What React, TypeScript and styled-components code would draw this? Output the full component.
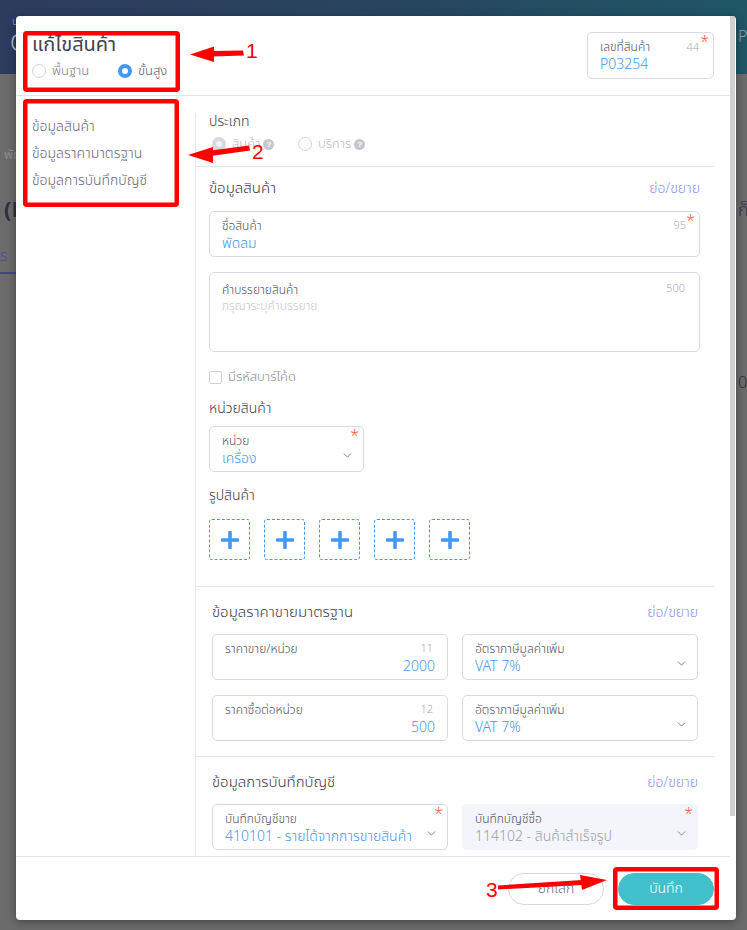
import React from 'react';
import styled, { createGlobalStyle } from 'styled-components';
import { ChevronDown } from 'lucide-react';

const GlobalStyle = createGlobalStyle`
    html, body {
        margin: 0;
        padding: 0;
    }
    body {
        font-family: "Noto Sans Thai", "Noto Sans", "DejaVu Sans", sans-serif;
        font-weight: 300;
    }
    * {
        box-sizing: border-box;
    }
`;

const BLUE = '#4398f3';
const LINE = '#e4e3ed';
const BORDER = '#dad9e6';

/* ---------- dimmed page behind the dialog ---------- */

const Page = styled.div`
    position: relative;
    width: 747px;
    height: 930px;
    overflow: hidden;
    background: #6b6b6b;
`;

const BgHeader = styled.div`
    height: 74px;
    display: flex;
    align-items: center;
    justify-content: space-between;
    padding-left: 10px;
    background: linear-gradient(90deg, #2d3b5d 0%, #28465f 55%, #1f5766 100%);
`;

const BgBrand = styled.div`
    display: flex;
    flex-direction: column;
    color: #a9b3c4;
    white-space: nowrap;
`;

const BgSmall = styled.span`
    font-size: 11px;
    line-height: 14px;
    padding-left: 2px;
`;

const BgBig = styled.span`
    font-size: 24px;
    line-height: 30px;
    color: #b9c1cd;
`;

const BgRight = styled.span<{ $color?: string; $size?: number }>`
    width: 9px;
    white-space: nowrap;
    color: ${(p) => p.$color || '#8fa0b2'};
    font-size: ${(p) => p.$size || 16}px;
`;

const BgBody = styled.div`
    display: flex;
    flex-direction: column;
    padding-left: 4px;
`;

const BgRow = styled.div<{ $mt: number; $h: number }>`
    margin-top: ${(p) => p.$mt}px;
    height: ${(p) => p.$h}px;
    display: flex;
    align-items: center;
    justify-content: space-between;
    white-space: nowrap;
`;

const BgText = styled.span<{ $color: string; $size: number; $bold?: boolean }>`
    color: ${(p) => p.$color};
    font-size: ${(p) => p.$size}px;
    font-weight: ${(p) => (p.$bold ? 700 : 400)};
`;

const BgTab = styled.div`
    width: 24px;
    margin-left: -4px;
    height: 34px;
    border-bottom: 2px solid #45457f;
    display: flex;
    align-items: center;
    color: #4a4a92;
    font-size: 16px;
    overflow: hidden;
    white-space: nowrap;
`;

/* ---------- dialog ---------- */

const Modal = styled.div`
    position: absolute;
    top: 16px;
    left: 16px;
    width: 720px;
    height: 904px;
    background: #fff;
    border-radius: 4px;
    box-shadow: 0 2px 10px rgba(0, 0, 0, 0.35);
    display: flex;
    overflow: hidden;
`;

const ModalMain = styled.div`
    flex: 1;
    min-width: 0;
    display: flex;
    flex-direction: column;
`;

const ScrollTrack = styled.div`
    flex: none;
    width: 6px;
`;

const ScrollThumb = styled.div`
    width: 5px;
    height: 800px;
    background: #d0d0d0;
`;

const Header = styled.div`
    flex: none;
    height: 80px;
    display: flex;
    justify-content: space-between;
    align-items: flex-start;
    padding: 16px 16px 0 16px;
    border-bottom: 1px solid ${LINE};
`;

const Title = styled.h1`
    margin: 0 0 3px;
    font-size: 20px;
    line-height: 26px;
    font-weight: 400;
    color: #434354;
`;

const RadioGroup = styled.div`
    display: flex;
`;

const RadioOption = styled.label<{ $tone: 'muted' | 'dark' | 'disabled' }>`
    width: 86px;
    display: flex;
    align-items: center;
    gap: 6px;
    font-size: 13px;
    line-height: 20px;
    color: ${(p) => (p.$tone === 'dark' ? '#555566' : p.$tone === 'disabled' ? '#b6b6c2' : '#7c7c8c')};
`;

const RadioDot = styled.span<{ $state: 'on' | 'off' | 'locked' }>`
    flex: none;
    width: 14px;
    height: 14px;
    border-radius: 50%;
    background: ${(p) => (p.$state === 'locked' ? '#f2f2f6' : '#fff')};
    border: ${(p) =>
        p.$state === 'on'
            ? `4px solid ${BLUE}`
            : p.$state === 'locked'
            ? '4px solid #d8d8e0'
            : '1px solid #d2d1de'};
`;

const HelpIcon = styled.span`
    width: 11px;
    height: 11px;
    margin-left: -3px;
    border-radius: 50%;
    background: #c6c6ce;
    color: #fff;
    font-family: "Liberation Sans", sans-serif;
    font-size: 8px;
    font-weight: 700;
    line-height: 11px;
    text-align: center;
`;

const Body = styled.div`
    flex: 1;
    min-height: 0;
    display: flex;
`;

const Nav = styled.nav`
    flex: none;
    width: 179px;
    padding: 17px 0 0 16px;
    display: flex;
    flex-direction: column;
`;

const NavItem = styled.span`
    font-size: 14px;
    line-height: 27px;
    color: #66667a;
`;

const Content = styled.div`
    flex: 1;
    min-width: 0;
    margin-top: 17px;
    padding-right: 16px;
    border-left: 1px solid #e6e5ee;
    overflow: hidden;
`;

const Section = styled.section<{ $pad: string; $last?: boolean }>`
    padding: ${(p) => p.$pad};
    border-bottom: ${(p) => (p.$last ? 'none' : `1px solid ${LINE}`)};
`;

const TypeTitle = styled.div`
    font-size: 14px;
    line-height: 18px;
    color: #3c3c4c;
`;

const TypeOptions = styled(RadioGroup)`
    margin-top: 3px;
    padding-left: 3px;
`;

const SectionHead = styled.div`
    height: 20px;
    display: flex;
    align-items: center;
    justify-content: space-between;
`;

const SectionTitle = styled.span`
    font-size: 15px;
    color: #3a3a4a;
`;

const CollapseLink = styled.span`
    font-size: 14px;
    color: #8794f2;
`;

const SubTitle = styled.div<{ $mt: number }>`
    margin-top: ${(p) => p.$mt}px;
    font-size: 14px;
    line-height: 20px;
    color: #3a3a4a;
`;

const FieldBox = styled.div<{ $w?: number; $h?: number; $mt?: number; $pt?: number; $locked?: boolean }>`
    position: relative;
    width: ${(p) => (p.$w ? `${p.$w}px` : 'auto')};
    height: ${(p) => p.$h || 46}px;
    margin-top: ${(p) => p.$mt || 0}px;
    padding: ${(p) => p.$pt ?? 6}px 12px 0 12px;
    border: 1px solid ${(p) => (p.$locked ? '#f4f5fa' : BORDER)};
    border-radius: 5px;
    background: ${(p) => (p.$locked ? '#f4f5fa' : '#fff')};
`;

const FieldLabel = styled.div`
    font-size: 12px;
    line-height: 16px;
    color: #505062;
`;

const FieldValue = styled.div<{ $right?: boolean; $muted?: boolean }>`
    font-size: 14px;
    line-height: 20px;
    text-align: ${(p) => (p.$right ? 'right' : 'left')};
    color: ${(p) => (p.$muted ? '#9c9cab' : BLUE)};
    white-space: nowrap;
`;

const Placeholder = styled.div`
    font-size: 12px;
    line-height: 16px;
    color: #c4c4ce;
`;

const Counter = styled.span<{ $top?: number; $right?: number }>`
    position: absolute;
    top: ${(p) => p.$top ?? 6}px;
    right: ${(p) => p.$right ?? 13}px;
    font-size: 11px;
    line-height: 16px;
    color: #a8a8b8;
`;

const Required = styled.span`
    position: absolute;
    top: 1px;
    right: 4px;
    font-size: 16px;
    line-height: 16px;
    color: #f0603c;
`;

const ChevronSlot = styled.span`
    position: absolute;
    right: 9px;
    bottom: 9px;
    display: flex;
    color: #6c6c7c;
`;

const CheckRow = styled.label`
    margin-top: 15px;
    height: 20px;
    display: flex;
    align-items: center;
    gap: 6px;
    font-size: 13px;
    color: #8a8a9a;
`;

const CheckBox = styled.span`
    width: 13px;
    height: 13px;
    border: 1px solid #cfcfdc;
    border-radius: 2px;
`;

const UploadRow = styled.div`
    margin-top: 13px;
    display: flex;
    gap: 14px;
`;

const UploadTile = styled.div`
    width: 41px;
    height: 41px;
    border: 1px dashed ${BLUE};
    border-radius: 3px;
    display: flex;
    align-items: center;
    justify-content: center;
`;

const FieldGrid = styled.div`
    margin-top: 12px;
    display: grid;
    grid-template-columns: 1fr 1fr;
    column-gap: 14px;
    row-gap: 15px;
`;

const Footer = styled.div`
    flex: none;
    height: 64px;
    display: flex;
    justify-content: flex-end;
    align-items: center;
    gap: 14px;
    padding-right: 16px;
    border-top: 1px solid ${LINE};
`;

const Button = styled.button<{ $primary?: boolean }>`
    width: 96px;
    height: 32px;
    border-radius: 16px;
    font: inherit;
    font-size: 14px;
    cursor: pointer;
    border: 1px solid ${(p) => (p.$primary ? '#41bfca' : '#d6d5e1')};
    background: ${(p) => (p.$primary ? '#41bfca' : '#fff')};
    color: ${(p) => (p.$primary ? '#fff' : '#6d6d7d')};
`;

/* ---------- red annotations drawn over the screenshot ---------- */

const Annotations = styled.svg`
    position: absolute;
    top: 0;
    left: 0;
    pointer-events: none;
`;

const Plus = () => (
    <svg width="18" height="18" viewBox="0 0 18 18">
        <path d="M9 1.5v15M1.5 9h15" stroke={BLUE} strokeWidth="3.6" strokeLinecap="round" />
    </svg>
);

const Help = () => <HelpIcon>?</HelpIcon>;

const Chevron = () => (
    <ChevronSlot>
        <ChevronDown size={13} strokeWidth={1.6} />
    </ChevronSlot>
);

const App = () => {
    return (
        <>
            <GlobalStyle />
            <Page>
                <BgHeader>
                    <BgBrand>
                        <BgSmall>บริษัท</BgSmall>
                        <BgBig>Online</BgBig>
                    </BgBrand>
                    <BgRight>PRO</BgRight>
                </BgHeader>
                <BgBody>
                    <BgRow $mt={71} $h={20}>
                        <BgText $color="#8b8b8b" $size={13}>พัดลม</BgText>
                    </BgRow>
                    <BgRow $mt={30} $h={30}>
                        <BgText $color="#30303e" $size={22} $bold>(F</BgText>
                        <BgRight $color="#35354a" $size={18}>ก็บ</BgRight>
                    </BgRow>
                    <BgRow $mt={14} $h={36}>
                        <BgTab>s</BgTab>
                    </BgRow>
                    <BgRow $mt={98} $h={20}>
                        <span />
                        <BgRight $color="#30303e" $size={16}>0.00</BgRight>
                    </BgRow>
                </BgBody>

                <Modal>
                    <ModalMain>
                        <Header>
                            <div>
                                <Title>แก้ไขสินค้า</Title>
                                <RadioGroup>
                                    <RadioOption $tone="muted">
                                        <RadioDot $state="off" />
                                        พื้นฐาน
                                    </RadioOption>
                                    <RadioOption $tone="dark">
                                        <RadioDot $state="on" />
                                        ขั้นสูง
                                    </RadioOption>
                                </RadioGroup>
                            </div>
                            <FieldBox $w={127} $h={47}>
                                <FieldLabel>เลขที่สินค้า</FieldLabel>
                                <FieldValue>P03254</FieldValue>
                                <Counter $top={7} $right={14}>44</Counter>
                                <Required>*</Required>
                            </FieldBox>
                        </Header>

                        <Body>
                            <Nav>
                                <NavItem>ข้อมูลสินค้า</NavItem>
                                <NavItem>ข้อมูลราคามาตรฐาน</NavItem>
                                <NavItem>ข้อมูลการบันทึกบัญชี</NavItem>
                            </Nav>

                            <Content>
                                <Section $pad="0 14px 12px 13px">
                                    <TypeTitle>ประเภท</TypeTitle>
                                    <TypeOptions>
                                        <RadioOption $tone="disabled">
                                            <RadioDot $state="locked" />
                                            สินค้า
                                            <Help />
                                        </RadioOption>
                                        <RadioOption $tone="disabled">
                                            <RadioDot $state="off" />
                                            บริการ
                                            <Help />
                                        </RadioOption>
                                    </TypeOptions>
                                </Section>

                                <Section $pad="11px 14px 26px 13px">
                                    <SectionHead>
                                        <SectionTitle>ข้อมูลสินค้า</SectionTitle>
                                        <CollapseLink>ย่อ/ขยาย</CollapseLink>
                                    </SectionHead>
                                    <FieldBox $mt={13}>
                                        <FieldLabel>ชื่อสินค้า</FieldLabel>
                                        <FieldValue>พัดลม</FieldValue>
                                        <Counter>95</Counter>
                                        <Required>*</Required>
                                    </FieldBox>
                                    <FieldBox $mt={15} $h={80} $pt={9}>
                                        <FieldLabel>คำบรรยายสินค้า</FieldLabel>
                                        <Placeholder>กรุณาระบุคำบรรยาย</Placeholder>
                                        <Counter $top={8} $right={14}>500</Counter>
                                    </FieldBox>
                                    <CheckRow>
                                        <CheckBox />
                                        มีรหัสบาร์โค้ด
                                    </CheckRow>
                                    <SubTitle $mt={12}>หน่วยสินค้า</SubTitle>
                                    <FieldBox $mt={7} $w={155}>
                                        <FieldLabel>หน่วย</FieldLabel>
                                        <FieldValue>เครื่อง</FieldValue>
                                        <Required>*</Required>
                                        <Chevron />
                                    </FieldBox>
                                    <SubTitle $mt={14}>รูปสินค้า</SubTitle>
                                    <UploadRow>
                                        {[0, 1, 2, 3, 4].map((i) => (
                                            <UploadTile key={i}>
                                                <Plus />
                                            </UploadTile>
                                        ))}
                                    </UploadRow>
                                </Section>

                                <Section $pad="15px 16px 15px 16px">
                                    <SectionHead>
                                        <SectionTitle>ข้อมูลราคาขายมาตรฐาน</SectionTitle>
                                        <CollapseLink>ย่อ/ขยาย</CollapseLink>
                                    </SectionHead>
                                    <FieldGrid>
                                        <FieldBox>
                                            <FieldLabel>ราคาขาย/หน่วย</FieldLabel>
                                            <FieldValue $right>2000</FieldValue>
                                            <Counter $right={14}>11</Counter>
                                        </FieldBox>
                                        <FieldBox>
                                            <FieldLabel>อัตราภาษีมูลค่าเพิ่ม</FieldLabel>
                                            <FieldValue>VAT 7%</FieldValue>
                                            <Chevron />
                                        </FieldBox>
                                        <FieldBox>
                                            <FieldLabel>ราคาซื้อต่อหน่วย</FieldLabel>
                                            <FieldValue $right>500</FieldValue>
                                            <Counter $right={14}>12</Counter>
                                        </FieldBox>
                                        <FieldBox>
                                            <FieldLabel>อัตราภาษีมูลค่าเพิ่ม</FieldLabel>
                                            <FieldValue>VAT 7%</FieldValue>
                                            <Chevron />
                                        </FieldBox>
                                    </FieldGrid>
                                </Section>

                                <Section $pad="15px 16px 0 16px" $last>
                                    <SectionHead>
                                        <SectionTitle>ข้อมูลการบันทึกบัญชี</SectionTitle>
                                        <CollapseLink>ย่อ/ขยาย</CollapseLink>
                                    </SectionHead>
                                    <FieldGrid>
                                        <FieldBox>
                                            <FieldLabel>บันทึกบัญชีขาย</FieldLabel>
                                            <FieldValue>410101 - รายได้จากการขายสินค้า</FieldValue>
                                            <Required>*</Required>
                                            <Chevron />
                                        </FieldBox>
                                        <FieldBox $locked>
                                            <FieldLabel>บันทึกบัญชีซื้อ</FieldLabel>
                                            <FieldValue $muted>114102 - สินค้าสำเร็จรูป</FieldValue>
                                            <Required>*</Required>
                                            <Chevron />
                                        </FieldBox>
                                    </FieldGrid>
                                </Section>
                            </Content>
                        </Body>

                        <Footer>
                            <Button>ยกเลิก</Button>
                            <Button $primary>บันทึก</Button>
                        </Footer>
                    </ModalMain>
                    <ScrollTrack>
                        <ScrollThumb />
                    </ScrollTrack>
                </Modal>

                <Annotations width="747" height="930" viewBox="0 0 747 930">
                    <g fill="none" stroke="#ff0000" strokeWidth="4.5">
                        <rect x="25.25" y="33.25" width="152.5" height="56.5" rx="1.5" />
                        <rect x="25.25" y="101.25" width="151.5" height="103.5" rx="1.5" />
                        <rect x="615.25" y="869.25" width="101.5" height="38.5" rx="1.5" />
                    </g>
                    <g fill="#ff0000">
                        <polygon points="212,51 243,50.5 244,55.5 212,56.5" />
                        <polygon points="190,54.5 214,46.5 214,62" />
                        <polygon points="211,150.5 249,145.5 250,150.5 211,156" />
                        <polygon points="188,155 213,147 213,163" />
                        <polygon points="498,885.5 582,880 582,885 498,889.5" />
                        <polygon points="607,880 580,875 582,890" />
                    </g>
                    <g fill="#ff0000" fontFamily="Liberation Sans, sans-serif" fontSize="21">
                        <text x="246" y="58">1</text>
                        <text x="252" y="159">2</text>
                        <text x="486" y="897">3</text>
                    </g>
                </Annotations>
            </Page>
        </>
    );
};

export default App;
